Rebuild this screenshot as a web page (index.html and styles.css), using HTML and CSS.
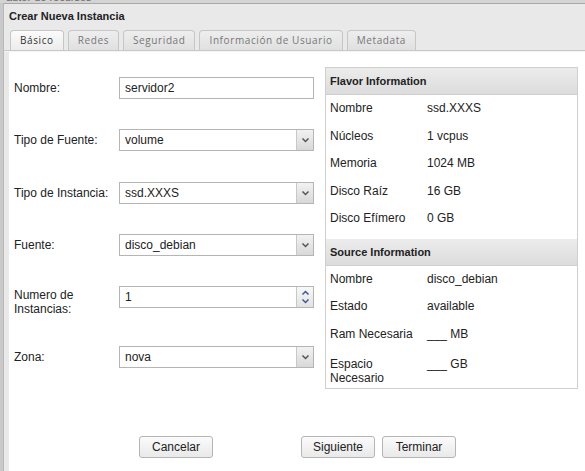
FILE: index.html
```html
<!DOCTYPE html>
<html>
<head>
<meta charset="utf-8">
<link rel="stylesheet" href="styles.css">
</head>
<body>
<div class="strip"><span>autor de recursos</span></div>
<div class="modal">
  <div class="title">Crear Nueva Instancia</div>
  <div class="tabs">
    <div class="tab active">Básico</div>
    <div class="tab">Redes</div>
    <div class="tab">Seguridad</div>
    <div class="tab">Información de Usuario</div>
    <div class="tab">Metadata</div>
  </div>
  <div class="content">
    <div class="main">
      <div class="form">
        <div class="row r1"><div class="label">Nombre:</div><div class="field"><span class="val">servidor2</span></div></div>
        <div class="row r2"><div class="label">Tipo de Fuente:</div><div class="field sel"><span class="val">volume</span><span class="arrow"><svg width="9" height="6" viewBox="0 0 9 6"><path d="M1.5 1.5 L4.5 4.5 L7.5 1.5" fill="none" stroke="#555" stroke-width="1.5"/></svg></span></div></div>
        <div class="row r3"><div class="label">Tipo de Instancia:</div><div class="field sel"><span class="val">ssd.XXXS</span><span class="arrow"><svg width="9" height="6" viewBox="0 0 9 6"><path d="M1.5 1.5 L4.5 4.5 L7.5 1.5" fill="none" stroke="#555" stroke-width="1.5"/></svg></span></div></div>
        <div class="row r4"><div class="label">Fuente:</div><div class="field sel"><span class="val">disco_debian</span><span class="arrow"><svg width="9" height="6" viewBox="0 0 9 6"><path d="M1.5 1.5 L4.5 4.5 L7.5 1.5" fill="none" stroke="#555" stroke-width="1.5"/></svg></span></div></div>
        <div class="row r5"><div class="label two">Numero de<br>Instancias:</div><div class="field spin"><span class="val">1</span><span class="spinbtn"><svg width="9" height="6" viewBox="0 0 9 6"><path d="M1.5 4.5 L4.5 1.5 L7.5 4.5" fill="none" stroke="#3b5a93" stroke-width="1.5"/></svg><svg width="9" height="6" viewBox="0 0 9 6"><path d="M1.5 1.5 L4.5 4.5 L7.5 1.5" fill="none" stroke="#3b5a93" stroke-width="1.5"/></svg></span></div></div>
        <div class="row r6"><div class="label">Zona:</div><div class="field sel"><span class="val">nova</span><span class="arrow"><svg width="9" height="6" viewBox="0 0 9 6"><path d="M1.5 1.5 L4.5 4.5 L7.5 1.5" fill="none" stroke="#555" stroke-width="1.5"/></svg></span></div></div>
      </div>
      <div class="panel">
        <div class="phead">Flavor Information</div>
        <div class="prow"><span class="k">Nombre</span><span>ssd.XXXS</span></div>
        <div class="prow"><span class="k">Núcleos</span><span>1 vcpus</span></div>
        <div class="prow"><span class="k">Memoria</span><span>1024 MB</span></div>
        <div class="prow"><span class="k">Disco Raíz</span><span>16 GB</span></div>
        <div class="prow"><span class="k">Disco Efímero</span><span>0 GB</span></div>
        <div class="phead second">Source Information</div>
        <div class="prow"><span class="k">Nombre</span><span>disco_debian</span></div>
        <div class="prow"><span class="k">Estado</span><span>available</span></div>
        <div class="prow"><span class="k">Ram Necesaria</span><span>___ MB</span></div>
        <div class="prow tall"><span class="k">Espacio<br>Necesario</span><span>___ GB</span></div>
      </div>
    </div>
    <div class="buttons">
      <div class="btn cancel">Cancelar</div>
      <div class="btn">Siguiente</div>
      <div class="btn">Terminar</div>
    </div>
  </div>
</div>
</body>
</html>
```
FILE: styles.css
```css
html, body { margin: 0; padding: 0; }
body {
  width: 585px; height: 471px; overflow: hidden;
  background: #c9c9c9;
  font-family: "Liberation Sans", Arial, sans-serif;
  font-size: 12px; color: #222;
}
.strip { height: 3px; overflow: hidden; padding-left: 6px; background: #d4d4d4; }
.strip span { display: block; margin-top: -9px; font-size: 11px; color: #666; line-height: 12px; }
.modal {
  margin-left: 3px; height: 468px;
  background: #e9e9e9;
  border-left: 1px solid #b8b8b8;
  border-top: 1px solid #a9a9a9;
  display: flex; flex-direction: column;
}
.title {
  height: 26px; line-height: 25px;
  padding-left: 5px;
  font-weight: bold; font-size: 11px; color: #222;
}
.tabs {
  display: flex; gap: 4px;
  padding-left: 6px;
  height: 20px;
  border-bottom: 1px solid #c9c9c9;
  box-shadow: 0 1px 0 #f4f4f4;
  margin-bottom: 1px;
}
.tab {
  height: 19px; line-height: 19px;
  padding: 0 9px;
  border: 1px solid #c6c6c6; border-bottom: none;
  border-radius: 4px 4px 0 0;
  background: linear-gradient(#eeeeee, #e0e0e0);
  font-family: "Open Sans", sans-serif; font-size: 10px; letter-spacing: 0.6px;
  color: #777;
}
.tab.active { background: linear-gradient(#fbfbfb, #ececec); color: #333; padding: 0 9px; }
.content {
  flex: 1; background: #fff; margin-left: 5px;
  display: flex; flex-direction: column;
}
.main { display: flex; align-items: flex-start; padding-top: 15px; }
.form { width: 311px; padding-left: 5px; padding-top: 10px; }
.row { display: flex; }
.r1 { height: 52px; }
.r2 { height: 53px; }
.r3 { height: 52px; }
.r4 { height: 52px; }
.r5 { height: 60px; }
.r6 { height: 22px; }
.label { width: 105px; padding-top: 4px; line-height: 14px; color: #222; }
.label.two { padding-top: 2px; }
.field {
  width: 193px; height: 20px;
  border: 1px solid #b5b5b5;
  display: flex; align-items: center;
  background: #fff;
}
.val { flex: 1; padding-left: 5px; }
.arrow {
  width: 16px; height: 20px;
  border-left: 1px solid #c8c8c8;
  background: linear-gradient(#f2f2f2, #d8d8d8);
  display: flex; align-items: center; justify-content: center;
}
.spinbtn {
  width: 16px; height: 20px;
  border-left: 1px solid #c8c8c8;
  background: linear-gradient(#f8f8f8, #e2e2e2);
  display: flex; flex-direction: column; align-items: center; justify-content: center; gap: 2px;
}
.panel {
  width: 251px;
  border: 1px solid #cfcfcf;
}
.phead {
  height: 26px; line-height: 26px;
  padding-left: 4px;
  background: linear-gradient(#ececec, #dcdcdc);
  border-bottom: 1px solid #cfcfcf;
  font-weight: bold; font-size: 11px; color: #222;
}
.phead.second { margin-top: 6px; }
.prow { display: flex; height: 27.5px; line-height: 27px; padding-left: 4px; }
.prow .k { width: 97px; }
.prow.tall { line-height: 14px; padding-top: 9px; height: 31px; }
.buttons { display: flex; padding-top: 47px; padding-left: 130px; }
.btn {
  width: 72px; height: 20px; line-height: 20px; text-align: center;
  border: 1px solid #b5b5b5; border-radius: 3px;
  background: linear-gradient(#fbfbfb, #e9e9e9);
  margin-right: 7px;
}
.btn.cancel { margin-right: 88px; }
```
